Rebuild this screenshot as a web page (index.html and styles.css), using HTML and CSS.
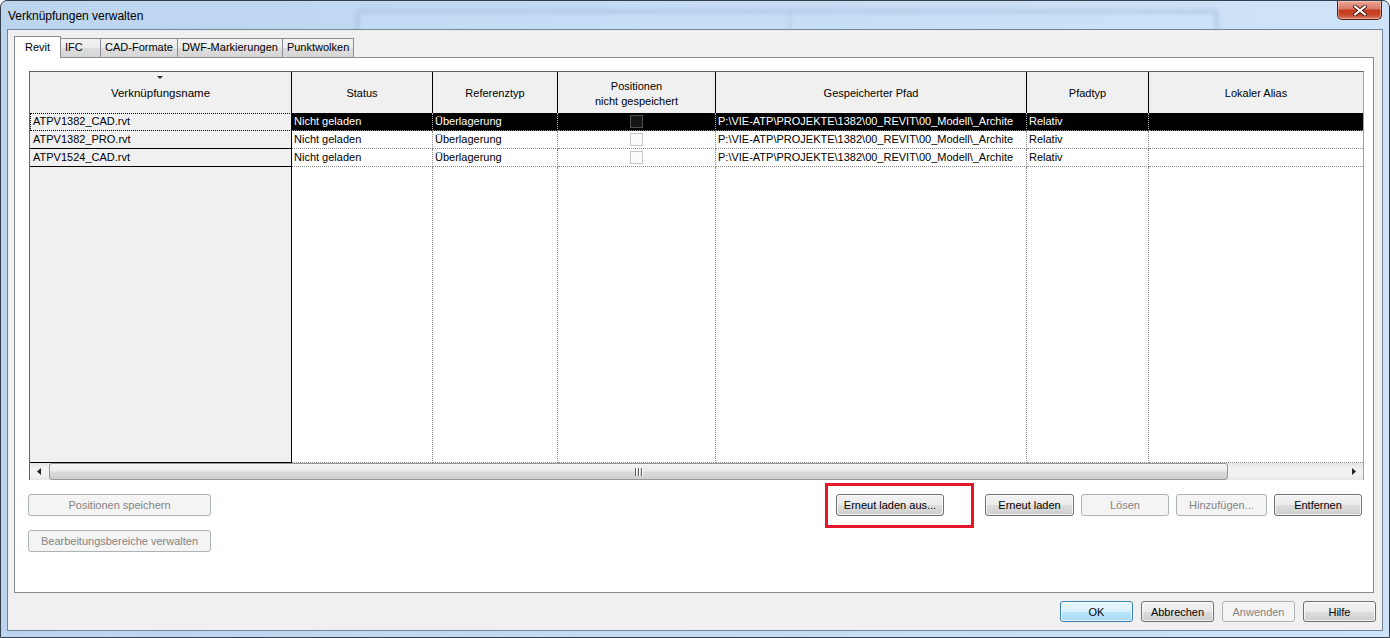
FILE: index.html
```html
<!DOCTYPE html>
<html lang="de">
<head>
    <meta charset="UTF-8">
    <title>Verknüpfungen verwalten</title>
    <link rel="stylesheet" href="styles.css">
</head>
<body>
    <div class="window">
        <div class="titlebar">
            <div class="ghost"><div class="ghost-split"></div></div>
            <span class="title">Verknüpfungen verwalten</span>
            <button class="close" type="button" aria-label="Schließen">
                <svg width="14" height="11" viewBox="0 0 14 11">
                    <path d="M2 1.5 L12 9.5 M12 1.5 L2 9.5" stroke="#4a1a12" stroke-width="4" stroke-linecap="round"/>
                    <path d="M2 1.5 L12 9.5 M12 1.5 L2 9.5" stroke="#ffffff" stroke-width="2.2" stroke-linecap="round"/>
                </svg>
            </button>
        </div>

        <div class="client">
            <div class="tabs">
                <div class="tab active">Revit</div>
                <div class="tab">IFC</div>
                <div class="tab">CAD-Formate</div>
                <div class="tab">DWF-Markierungen</div>
                <div class="tab">Punktwolken</div>
            </div>

            <div class="panel">
                <div class="grid">
                    <div class="cells">
                        <div class="hd sortable"><span class="sort"></span>Verknüpfungsname</div>
                        <div class="hd">Status</div>
                        <div class="hd">Referenztyp</div>
                        <div class="hd">Positionen<br>nicht gespeichert</div>
                        <div class="hd">Gespeicherter Pfad</div>
                        <div class="hd">Pfadtyp</div>
                        <div class="hd">Lokaler Alias</div>

                        <div class="c name focus">ATPV1382_CAD.rvt</div>
                        <div class="c sel">Nicht geladen</div>
                        <div class="c sel">Überlagerung</div>
                        <div class="c sel center"><span class="chk dark"></span></div>
                        <div class="c sel">P:\VIE-ATP\PROJEKTE\1382\00_REVIT\00_Modell\_Archite</div>
                        <div class="c sel">Relativ</div>
                        <div class="c sel last"></div>

                        <div class="c name">ATPV1382_PRO.rvt</div>
                        <div class="c">Nicht geladen</div>
                        <div class="c">Überlagerung</div>
                        <div class="c center"><span class="chk"></span></div>
                        <div class="c">P:\VIE-ATP\PROJEKTE\1382\00_REVIT\00_Modell\_Archite</div>
                        <div class="c">Relativ</div>
                        <div class="c last"></div>

                        <div class="c name">ATPV1524_CAD.rvt</div>
                        <div class="c">Nicht geladen</div>
                        <div class="c">Überlagerung</div>
                        <div class="c center"><span class="chk"></span></div>
                        <div class="c">P:\VIE-ATP\PROJEKTE\1382\00_REVIT\00_Modell\_Archite</div>
                        <div class="c">Relativ</div>
                        <div class="c last"></div>

                        <div class="c name"></div>
                        <div class="c"></div>
                        <div class="c"></div>
                        <div class="c"></div>
                        <div class="c"></div>
                        <div class="c"></div>
                        <div class="c last"></div>
                    </div>

                    <div class="hscroll">
                        <div class="arrow">
                            <svg width="4" height="7" viewBox="0 0 4 7"><path d="M4 0 L0 3.5 L4 7 Z" fill="#222"/></svg>
                        </div>
                        <div class="thumb">
                            <svg width="8" height="8" viewBox="0 0 8 8">
                                <path d="M0.5 0 V8 M3.5 0 V8 M6.5 0 V8" stroke="#5a5a5a" stroke-width="1"/>
                                <path d="M1.5 0 V8 M4.5 0 V8 M7.5 0 V8" stroke="#ffffff" stroke-width="1"/>
                            </svg>
                        </div>
                        <div class="track"></div>
                        <div class="arrow">
                            <svg width="4" height="7" viewBox="0 0 4 7"><path d="M0 0 L4 3.5 L0 7 Z" fill="#222"/></svg>
                        </div>
                    </div>
                </div>

                <div class="actions">
                    <div class="actions-left">
                        <button class="btn wide" type="button" disabled>Positionen speichern</button>
                        <button class="btn wide" type="button" disabled>Bearbeitungsbereiche verwalten</button>
                    </div>
                    <div class="actions-right">
                        <span class="marked"><button class="btn reload-from" type="button">Erneut laden aus...</button></span>
                        <button class="btn w89" type="button">Erneut laden</button>
                        <button class="btn w88" type="button" disabled>Lösen</button>
                        <button class="btn w91" type="button" disabled>Hinzufügen...</button>
                        <button class="btn w88" type="button">Entfernen</button>
                    </div>
                </div>
            </div>

            <div class="dialog-buttons">
                <button class="btn dlg default" type="button">OK</button>
                <button class="btn dlg" type="button">Abbrechen</button>
                <button class="btn dlg" type="button" disabled>Anwenden</button>
                <button class="btn dlg" type="button">Hilfe</button>
            </div>
        </div>
    </div>
</body>
</html>
```

FILE: styles.css
```css
body {
    margin: 0;
    background: #ffffff;
    font-family: "Liberation Sans", Arial, sans-serif;
    font-size: 11px;
    color: #000;
}
.window {
    width: 1390px;
    height: 638px;
    box-sizing: border-box;
    border: 1px solid #34404e;
    border-radius: 7px 7px 0 0;
    padding: 0 6px 6px;
    background: linear-gradient(to right, #bcd4ee, #c4dbf3 45%, #cfe3f8);
    display: flex;
    flex-direction: column;
    overflow: hidden;
}
.titlebar {
    height: 28px;
    flex-shrink: 0;
    position: relative;
    overflow: hidden;
    display: flex;
    justify-content: space-between;
    align-items: flex-start;
}
/* blurred window behind the glass */
.ghost {
    position: absolute;
    left: 349px;
    top: 9px;
    width: 856px;
    height: 34px;
    border: 3px solid rgba(125, 155, 190, 0.35);
    border-radius: 3px;
    background: rgba(200, 225, 250, 0.35);
    filter: blur(2px);
}
.ghost-split {
    position: absolute;
    left: 430px;
    top: 0;
    bottom: 0;
    border-left: 2px solid rgba(125, 155, 190, 0.3);
}
.title {
    position: relative;
    font-size: 12px;
    line-height: 30px;
    padding-left: 1px;
}
.close {
    position: relative;
    width: 45px;
    height: 19px;
    margin-right: 1px;
    padding: 0;
    border: 1px solid #51221a;
    border-top: none;
    border-radius: 0 0 5px 5px;
    background: linear-gradient(#e9a897, #dc7c66 42%, #c43a1f 52%, #c8472b 78%, #dc8066);
    box-shadow: inset 0 0 0 1px rgba(255, 220, 210, 0.45);
    display: flex;
    align-items: center;
    justify-content: center;
}
.client {
    flex: 1;
    border: 1px solid #72849a;
    background: #f0f0f0;
    display: flex;
    flex-direction: column;
}
.tabs {
    height: 21px;
    padding: 6px 0 0 6px;
    display: flex;
    align-items: flex-end;
    flex-shrink: 0;
}
.tab {
    height: 19px;
    box-sizing: border-box;
    min-width: 41px;
    padding: 0 4px;
    line-height: 17px;
    border: 1px solid #898c95;
    border-bottom: none;
    margin-left: -1px;
    background: linear-gradient(#f3f3f3, #ebebeb 50%, #dedede 50%, #d6d6d6);
}
.tab.active {
    height: 22px;
    margin-left: 0;
    margin-bottom: -1px;
    padding: 0 10px;
    line-height: 20px;
    background: #ffffff;
    position: relative;
    z-index: 1;
}
.panel {
    flex: 1;
    margin: 0 8px 0 6px;
    padding: 13px 0 0 14px;
    border: 1px solid #898c95;
    background: #ffffff;
}
.grid {
    width: 1335px;
    box-sizing: border-box;
    border: 1px solid #a3a3a3;
    border-top-color: #646464;
    border-left-color: #646464;
    border-bottom: none;
}
.cells {
    display: grid;
    grid-template-columns: 262px 141px 125px 158px 311px 122px 1fr;
    grid-template-rows: 41px 18px 18px 18px 296px;
}
.hd {
    position: relative;
    box-sizing: border-box;
    background: #f0f0f0;
    border-right: 1px solid #000;
    display: flex;
    align-items: center;
    justify-content: center;
    text-align: center;
    line-height: 15px;
    padding-top: 2px;
}
.hd.sortable {
    font-size: 11.5px;
}
.hd:nth-child(7) {
    border-right: none;
}
.sort {
    position: absolute;
    left: 127px;
    top: 4px;
    border-left: 3px solid transparent;
    border-right: 3px solid transparent;
    border-top: 3px solid #333;
}
.c {
    box-sizing: border-box;
    border-right: 1px dotted #8a8a8a;
    border-bottom: 1px dotted #8a8a8a;
    padding: 0 2px;
    line-height: 17px;
    white-space: nowrap;
    overflow: hidden;
}
.c.last {
    border-right: none;
}
.c.name {
    background: #f0f0f0;
    border-right: 1px solid #000;
    border-bottom: 1px solid #000;
    padding-left: 3px;
}
.c.name.focus {
    border: 1px dotted #000;
    border-right: 1px solid #000;
    padding-left: 2px;
    line-height: 15px;
}
.c.sel {
    background: #000;
    color: #fff;
    border-right-color: #b0b0b0;
}
.c.center {
    display: flex;
    align-items: center;
    justify-content: center;
}
.chk {
    width: 13px;
    height: 13px;
    box-sizing: border-box;
    border: 1px solid #c6c6c6;
    background: #fbfbfb;
}
.chk.dark {
    border-color: #4e4e4e;
    background: #151515;
}
.hscroll {
    height: 17px;
    display: flex;
    background: linear-gradient(#e2e2e2, #f1f1f1 25%, #f1f1f1 75%, #e6e6e6);
}
.arrow {
    width: 18px;
    flex-shrink: 0;
    display: flex;
    align-items: center;
    justify-content: center;
}
.thumb {
    width: 1179px;
    margin-left: 1px;
    box-sizing: border-box;
    border: 1px solid #979797;
    border-radius: 3px;
    background: linear-gradient(#f5f5f5, #ececec 45%, #dadada 55%, #cdcdcd);
    display: flex;
    align-items: center;
    justify-content: center;
}
.track {
    flex: 1;
}
.actions {
    width: 1334px;
    margin: 14px 0 0 -1px;
    display: flex;
    justify-content: space-between;
    align-items: flex-start;
}
.actions-left {
    display: flex;
    flex-direction: column;
    gap: 14px;
}
.actions-right {
    display: flex;
    gap: 7px;
}
.btn {
    height: 22px;
    box-sizing: border-box;
    padding: 0;
    border: 1px solid #707070;
    border-radius: 3px;
    background: linear-gradient(#f2f2f2, #ebebeb 50%, #dddddd 50%, #cfcfcf);
    box-shadow: inset 0 0 0 1px rgba(255, 255, 255, 0.7);
    font-family: "Liberation Sans", Arial, sans-serif;
    font-size: 11px;
    color: #000;
}
.btn:disabled {
    border-color: #adb2b5;
    background: #f4f4f4;
    box-shadow: none;
    color: #838383;
}
.btn.default {
    border-color: #3c7fb1;
    background: linear-gradient(#eaf6fd, #d9f0fc 50%, #bee6fd 50%, #a7d9f5);
}
.wide { width: 183px; }
.reload-from { width: 108px; }
.w88 { width: 88px; }
.w89 { width: 89px; }
.w91 { width: 91px; }
.dlg {
    width: 73px;
    height: 21px;
}
/* annotation frame around the button */
.marked {
    position: relative;
    display: flex;
    margin-right: 34px;
}
.marked::after {
    content: "";
    position: absolute;
    left: -11px;
    top: -11px;
    right: -30px;
    bottom: -12px;
    border: 3px solid #e5182b;
}
.dialog-buttons {
    display: flex;
    justify-content: flex-end;
    gap: 8px;
    margin-top: 8px;
    padding: 0 6px 8px 0;
}
```
